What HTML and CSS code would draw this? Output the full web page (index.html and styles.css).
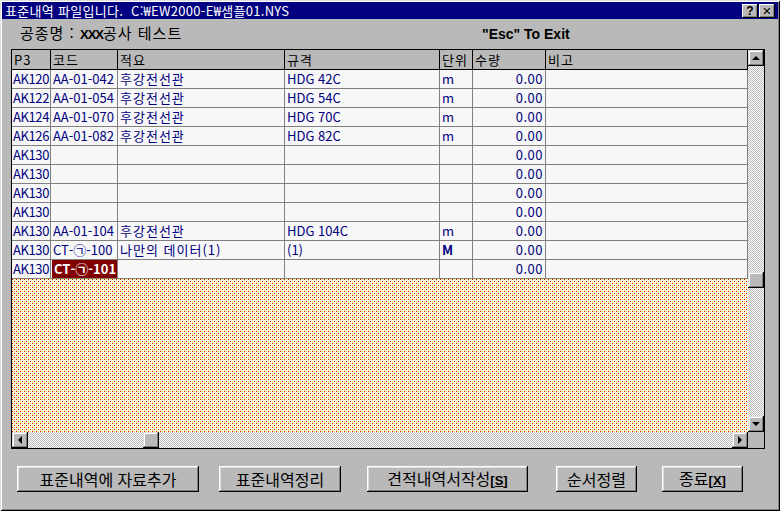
FILE: index.html
```html
<!DOCTYPE html>
<html lang="ko">
<head>
<meta charset="utf-8">
<link rel="stylesheet" href="styles.css">
</head>
<body>
<div class="window">
  <div class="titlebar">
    <span class="title">표준내역 파일입니다.&nbsp;&nbsp;C:₩EW2000-E₩샘플01.NYS</span>
    <div class="tbtns">
      <span class="tbtn">?</span>
      <span class="tbtn tclose">×</span>
    </div>
  </div>
  <div class="info">
    <span class="proj">공종명 : <b class="xxx">XXX</b>공사 테스트</span>
    <span class="esc">"Esc" To Exit</span>
  </div>
  <div class="grid">
    <div class="table">
      <div class="row head">
        <div class="c">P3</div><div class="c">코드</div><div class="c">적요</div><div class="c">규격</div><div class="c">단위</div><div class="c">수량</div><div class="c">비고</div>
      </div>
      <div class="row"><div class="c id">AK120</div><div class="c">AA-01-042</div><div class="c ko">후강전선관</div><div class="c">HDG 42C</div><div class="c">m</div><div class="c num">0.00</div><div class="c"></div></div>
      <div class="row"><div class="c id">AK122</div><div class="c">AA-01-054</div><div class="c ko">후강전선관</div><div class="c">HDG 54C</div><div class="c">m</div><div class="c num">0.00</div><div class="c"></div></div>
      <div class="row"><div class="c id">AK124</div><div class="c">AA-01-070</div><div class="c ko">후강전선관</div><div class="c">HDG 70C</div><div class="c">m</div><div class="c num">0.00</div><div class="c"></div></div>
      <div class="row"><div class="c id">AK126</div><div class="c">AA-01-082</div><div class="c ko">후강전선관</div><div class="c">HDG 82C</div><div class="c">m</div><div class="c num">0.00</div><div class="c"></div></div>
      <div class="row"><div class="c id">AK130</div><div class="c"></div><div class="c"></div><div class="c"></div><div class="c"></div><div class="c num">0.00</div><div class="c"></div></div>
      <div class="row"><div class="c id">AK130</div><div class="c"></div><div class="c"></div><div class="c"></div><div class="c"></div><div class="c num">0.00</div><div class="c"></div></div>
      <div class="row"><div class="c id">AK130</div><div class="c"></div><div class="c"></div><div class="c"></div><div class="c"></div><div class="c num">0.00</div><div class="c"></div></div>
      <div class="row"><div class="c id">AK130</div><div class="c"></div><div class="c"></div><div class="c"></div><div class="c"></div><div class="c num">0.00</div><div class="c"></div></div>
      <div class="row"><div class="c id">AK130</div><div class="c">AA-01-104</div><div class="c ko">후강전선관</div><div class="c">HDG 104C</div><div class="c">m</div><div class="c num">0.00</div><div class="c"></div></div>
      <div class="row"><div class="c id">AK130</div><div class="c">CT-㉠-100</div><div class="c ko">나만의 데이터(1)</div><div class="c">(1)</div><div class="c unitb">M</div><div class="c num">0.00</div><div class="c"></div></div>
      <div class="row"><div class="c id">AK130</div><div class="c sel"><span class="selbox">CT-㉠-101</span></div><div class="c"></div><div class="c"></div><div class="c"></div><div class="c num">0.00</div><div class="c"></div></div>
      <div class="empty">
        <svg class="dots" width="100%" height="100%" xmlns="http://www.w3.org/2000/svg" shape-rendering="crispEdges">
          <defs>
            <pattern id="dotpat" width="4" height="4" patternUnits="userSpaceOnUse">
              <rect x="0" y="0" width="1" height="1" fill="#e80000"/>
              <rect x="2" y="2" width="1" height="1" fill="#e80000"/>
              <rect x="2" y="0" width="1" height="1" fill="#ffff00"/>
              <rect x="0" y="2" width="1" height="1" fill="#ffff00"/>
            </pattern>
          </defs>
          <rect width="100%" height="100%" fill="url(#dotpat)"/>
        </svg>
      </div>
    </div>
    <div class="vscroll">
      <div class="sbtn"><span class="arr up"></span></div>
      <div class="vtrack"><div class="sbtn vthumb"></div></div>
      <div class="sbtn"><span class="arr down"></span></div>
    </div>
    <div class="hscroll">
      <div class="sbtn"><span class="arr left"></span></div>
      <div class="htrack"><div class="sbtn hthumb"></div></div>
      <div class="sbtn"><span class="arr right"></span></div>
    </div>
    <div class="corner"></div>
  </div>
  <div class="buttons">
    <button class="btn b1">표준내역에 자료추가</button>
    <button class="btn b2">표준내역정리</button>
    <button class="btn b3">견적내역서작성<span class="key">[<u>S</u>]</span></button>
    <button class="btn b4">순서정렬</button>
    <button class="btn b5">종료<span class="key">[<u>X</u>]</span></button>
  </div>
</div>
</body>
</html>
```
FILE: styles.css
```css
* { box-sizing: border-box; }
html, body { margin: 0; padding: 0; }
body {
  width: 780px;
  height: 511px;
  overflow: hidden;
  background: #b9b9b9;
  font-family: "Noto Sans CJK KR", "Noto Sans", sans-serif;
}
.window {
  width: 780px;
  height: 511px;
  padding: 2px;
  background: #b9b9b9;
  box-shadow: inset 1px 1px #dfdfdf, inset -1px -1px #000, inset 2px 2px #fff, inset -2px -2px #808080;
  display: flex;
  flex-direction: column;
}
.titlebar {
  height: 17px;
  background: #000080;
  color: #fff;
  display: flex;
  align-items: center;
  justify-content: space-between;
  padding: 0 3px 0 3px;
}
.title {
  font-size: 13px;
  line-height: 17px;
  letter-spacing: 0.3px;
  white-space: pre;
}
.tbtns { display: flex; gap: 1px; }
.tbtn {
  width: 16px;
  height: 14px;
  background: #b9b9b9;
  color: #000;
  font-family: "Liberation Sans", sans-serif;
  font-weight: bold;
  font-size: 12px;
  line-height: 14px;
  text-align: center;
  box-shadow: inset -1px -1px #000, inset 1px 1px #fff, inset -2px -2px #808080;
}
.tclose { font-size: 15px; font-weight: normal; }
.info {
  height: 30px;
  display: flex;
  align-items: center;
  padding-left: 18px;
}
.proj {
  width: 462px;
  font-size: 15px;
  line-height: 18px;
  letter-spacing: 1px;
  color: #000;
}
.xxx {
  font-family: "Liberation Sans", sans-serif;
  font-weight: bold;
  font-size: 13px;
  letter-spacing: -1px;
}
.esc {
  font-family: "Liberation Sans", sans-serif;
  font-weight: bold;
  font-size: 14px;
}
.grid {
  margin-left: 9px;
  width: 754px;
  height: 400px;
  border: 1px solid #000;
  display: grid;
  grid-template-columns: 736px 16px;
  grid-template-rows: 382px 16px;
}
.table {
  display: flex;
  flex-direction: column;
  background: #f7f7f7;
}
.row {
  display: grid;
  grid-template-columns: 39px 67px 167px 155px 33px 73px 202px;
  height: 19px;
  flex: none;
}
.c {
  border-right: 1px solid #808080;
  border-bottom: 1px solid #808080;
  padding-left: 2px;
  font-size: 13px;
  line-height: 18px;
  color: #000080;
  white-space: nowrap;
  overflow: hidden;
}
.c.id { padding-left: 1px; letter-spacing: -0.4px; }
.c.ko { letter-spacing: 1px; }
.row.head { height: 20px; background: #b9b9b9; }
.row.head .c {
  border-right-color: #000;
  border-bottom-color: #000;
  color: #000;
  line-height: 19px;
  letter-spacing: 1px;
}
.num { text-align: right; padding-right: 2px; letter-spacing: 0.5px; }
.unitb { font-weight: bold; }
.sel { padding: 0; }
.selbox {
  display: block;
  height: 18px;
  margin-left: 1px;
  padding-left: 2px;
  background: #800000;
  color: #fff;
  font-weight: bold;
}
.empty {
  flex: 1;
  background-color: #f7f7f7;
  overflow: hidden;
}
.dots { display: block; }
.vscroll {
  display: flex;
  flex-direction: column;
}
.hscroll {
  display: flex;
}
.sbtn {
  width: 16px;
  height: 16px;
  flex: none;
  background: #b9b9b9;
  box-shadow: inset -1px -1px #000, inset 1px 1px #dfdfdf, inset -2px -2px #808080, inset 2px 2px #fff;
  display: flex;
  align-items: center;
  justify-content: center;
}
.vtrack, .htrack {
  flex: 1;
  display: flex;
  background: repeating-conic-gradient(#ffffff 0 25%, #b9b9b9 0 50%) 0 0 / 2px 2px;
}
.vtrack { flex-direction: column; }
.vthumb { margin-top: 206px; }
.hthumb { margin-left: 115px; }
.corner { background: #b9b9b9; }
.arr { width: 0; height: 0; display: block; }
.arr.up { border-left: 4px solid transparent; border-right: 4px solid transparent; border-bottom: 4px solid #000; }
.arr.down { border-left: 4px solid transparent; border-right: 4px solid transparent; border-top: 4px solid #000; }
.arr.left { border-top: 4px solid transparent; border-bottom: 4px solid transparent; border-right: 4px solid #000; }
.arr.right { border-top: 4px solid transparent; border-bottom: 4px solid transparent; border-left: 4px solid #000; }
.buttons {
  display: flex;
  margin-top: 17px;
  padding-left: 15px;
}
.btn {
  height: 26px;
  padding: 0;
  border: none;
  background: #b9b9b9;
  font-family: "Noto Sans CJK KR", sans-serif;
  font-size: 16px;
  line-height: 24px;
  color: #000;
  box-shadow: inset -1px -1px #000, inset 1px 1px #fff, inset -2px -2px #808080, inset 2px 2px #dfdfdf;
}
.b1 { width: 182px; }
.b2 { width: 122px; margin-left: 20px; }
.b3 { width: 161px; margin-left: 26px; }
.b4 { width: 81px; margin-left: 28px; }
.b5 { width: 81px; margin-left: 25px; }
.key {
  font-family: "Liberation Sans", sans-serif;
  font-weight: bold;
  font-size: 13px;
}
```
